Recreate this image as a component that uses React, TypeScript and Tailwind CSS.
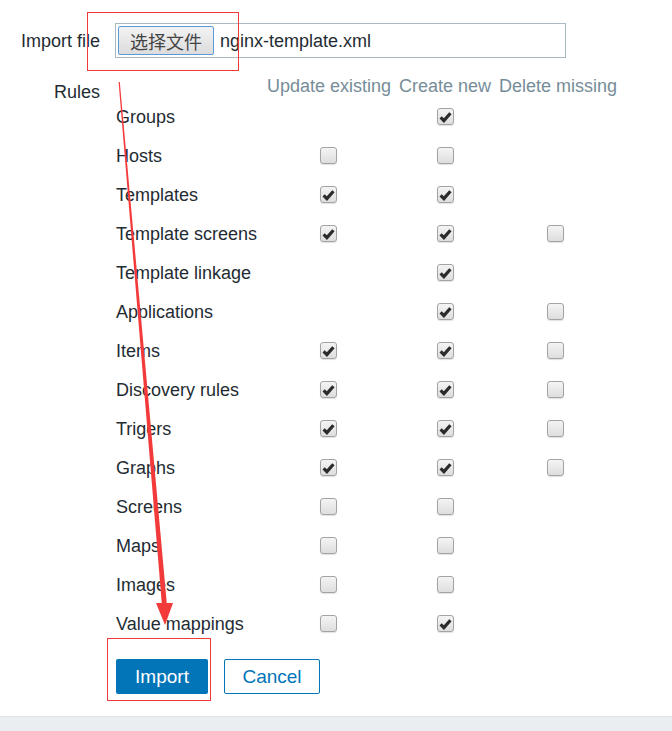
import React from "react";

type Cell = "on" | "off" | null;

const rows: [string, Cell, Cell, Cell][] = [
  ["Groups", null, "on", null],
  ["Hosts", "off", "off", null],
  ["Templates", "on", "on", null],
  ["Template screens", "on", "on", "off"],
  ["Template linkage", null, "on", null],
  ["Applications", null, "on", "off"],
  ["Items", "on", "on", "off"],
  ["Discovery rules", "on", "on", "off"],
  ["Trigers", "on", "on", "off"],
  ["Graphs", "on", "on", "off"],
  ["Screens", "off", "off", null],
  ["Maps", "off", "off", null],
  ["Images", "off", "off", null],
  ["Value mappings", "off", "on", null],
];

function Box({ state }: { state: Cell }) {
  if (!state) return null;
  return (
    <div className="w-[17px] h-[17px] rounded-[3px] border border-[#a3a3a3] bg-gradient-to-b from-[#f4f4f4] to-[#dedede] shadow-[0_1px_1px_rgba(0,0,0,0.12)] flex items-center justify-center">
      {state === "on" && (
        <svg width="13" height="12" viewBox="0 0 13 12">
          <path d="M1.6 6.4 L4.9 9.6 L11.4 2.2" fill="none" stroke="#2b2b2b" strokeWidth="3.2" strokeLinecap="butt" strokeLinejoin="miter" />
        </svg>
      )}
    </div>
  );
}

export default function App() {
  return (
    <div className="relative w-[672px] h-[731px] bg-white overflow-hidden text-[18px] leading-[22px] text-[#1f2c33]" style={{ fontFamily: '"Liberation Sans", Arial, sans-serif' }}>
      <div className="pt-[23px]">
        <div className="flex items-center">
          <div className="w-[100px] text-right">Import file</div>
          <div className="ml-[15px] w-[451px] h-[35px] border border-[#a9b9c2] flex items-center px-[2px]">
            <div
              className="w-[96px] h-[29px] rounded-[2px] border border-[#5b9ad8] bg-gradient-to-b from-[#f3f3f3] to-[#dcdcdc] flex items-center justify-center text-[#444] text-[18px]"
              style={{ fontFamily: '"Noto Sans CJK SC", sans-serif' }}
            >
              选择文件
            </div>
            <span className="ml-[6px]">nginx-template.xml</span>
          </div>
        </div>

        <div className="flex mt-[16px]">
          <div className="w-[100px] text-right pt-[7px]">Rules</div>
          <div className="ml-[16px]">
            <div className="grid grid-cols-[151px_123px_9px_92px_8px_118px] h-[23px] items-center text-[#768d99]">
              <div />
              <div className="text-center whitespace-nowrap">Update existing</div>
              <div />
              <div className="text-center whitespace-nowrap">Create new</div>
              <div />
              <div className="text-center whitespace-nowrap">Delete missing</div>
            </div>
            {rows.map(([label, a, b, c]) => (
              <div key={label} className="grid grid-cols-[151px_123px_9px_92px_8px_118px] h-[39px] items-center">
                <div className="whitespace-nowrap">{label}</div>
                <div className="flex justify-center"><Box state={a} /></div>
                <div />
                <div className="flex justify-center"><Box state={b} /></div>
                <div />
                <div className="flex justify-center pr-[6px]"><Box state={c} /></div>
              </div>
            ))}
            <div className="flex gap-[16px] mt-[16px]">
              <button className="w-[92px] h-[35px] rounded-[2px] bg-[#0275b8] text-white text-[19px]">Import</button>
              <button className="w-[96px] h-[35px] rounded-[2px] border border-[#0275b8] text-[#0275b8] text-[19px] bg-white">Cancel</button>
            </div>
          </div>
        </div>
      </div>

      <div className="absolute left-0 right-0 top-[716px] bottom-0 border-t border-[#dde2e5] bg-[#ebeef0]" />

      <div className="absolute left-[87px] top-[12px] w-[152px] h-[59px] border border-[#f03a3a]" />
      <div className="absolute left-[107px] top-[638px] w-[104px] h-[63px] border border-[#f03a3a]" />

      <svg className="absolute left-0 top-0 pointer-events-none" width="672" height="731">
        <polygon points="118.6,82 119.8,82 167,606 162,606" fill="#f23a3a" />
        <polygon points="156,603 173,603 165,625" fill="#f23a3a" />
      </svg>
    </div>
  );
}
